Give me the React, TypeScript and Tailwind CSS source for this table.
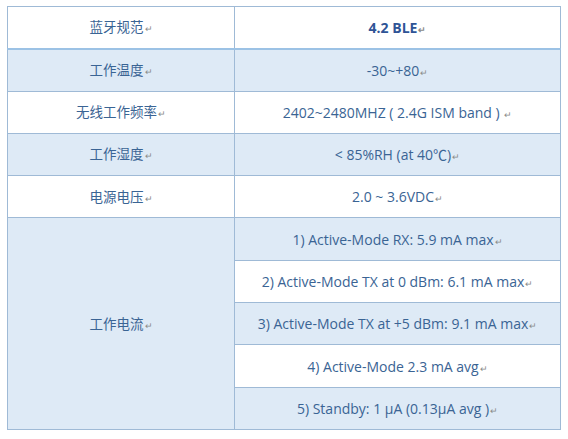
const Mark = () => <span className="ml-[1px] text-[9px] text-[#8a8a8a]">↵</span>;

const rows: { label: string; value: string }[] = [
  { label: '工作温度', value: '-30~+80' },
  { label: '无线工作频率', value: '2402~2480MHZ ( 2.4G ISM band ) ' },
  { label: '工作湿度', value: '< 85%RH (at 40℃)' },
  { label: '电源电压', value: '2.0 ~ 3.6VDC' },
];

const currents = [
  '1) Active-Mode RX: 5.9 mA max',
  '2) Active-Mode TX at 0 dBm: 6.1 mA max',
  '3) Active-Mode TX at +5 dBm: 9.1 mA max',
  '4) Active-Mode 2.3 mA avg',
  '5) Standby: 1 μA (0.13μA avg )',
];

const cell = 'h-[42.3px] border border-[#9fbad6] text-center align-middle';
const label = `${cell} text-[13.5px]`;
const value = `${cell} text-[14px] whitespace-pre`;

export default function App() {
  return (
    <div
      className="h-[439px] w-[568px] bg-white pl-[7px] pt-[6px] text-[#3a6494]"
      style={{ fontFamily: '"Open Sans", "Noto Sans CJK SC", sans-serif' }}
    >
      <table className="w-[554px] border-collapse">
        <tbody>
          <tr className="bg-white">
            <td className={`${label} w-[227px] border-b-2 border-b-[#9cc2e5]`}>
              蓝牙规范
              <Mark />
            </td>
            <td className={`${value} border-b-2 border-b-[#9cc2e5] font-bold text-[#2f5496]`}>
              4.2 BLE
              <Mark />
            </td>
          </tr>
          {rows.map((r, i) => (
            <tr key={r.label} className={i % 2 === 0 ? 'bg-[#deeaf6]' : 'bg-white'}>
              <td className={label}>
                {r.label}
                <Mark />
              </td>
              <td className={value}>
                {r.value}
                <Mark />
              </td>
            </tr>
          ))}
          {currents.map((c, i) => (
            <tr key={c} className={i % 2 === 0 ? 'bg-[#deeaf6]' : 'bg-white'}>
              {i === 0 && (
                <td rowSpan={5} className={`${label} bg-[#deeaf6]`}>
                  工作电流
                  <Mark />
                </td>
              )}
              <td className={value}>
                {c}
                <Mark />
              </td>
            </tr>
          ))}
        </tbody>
      </table>
    </div>
  );
}
